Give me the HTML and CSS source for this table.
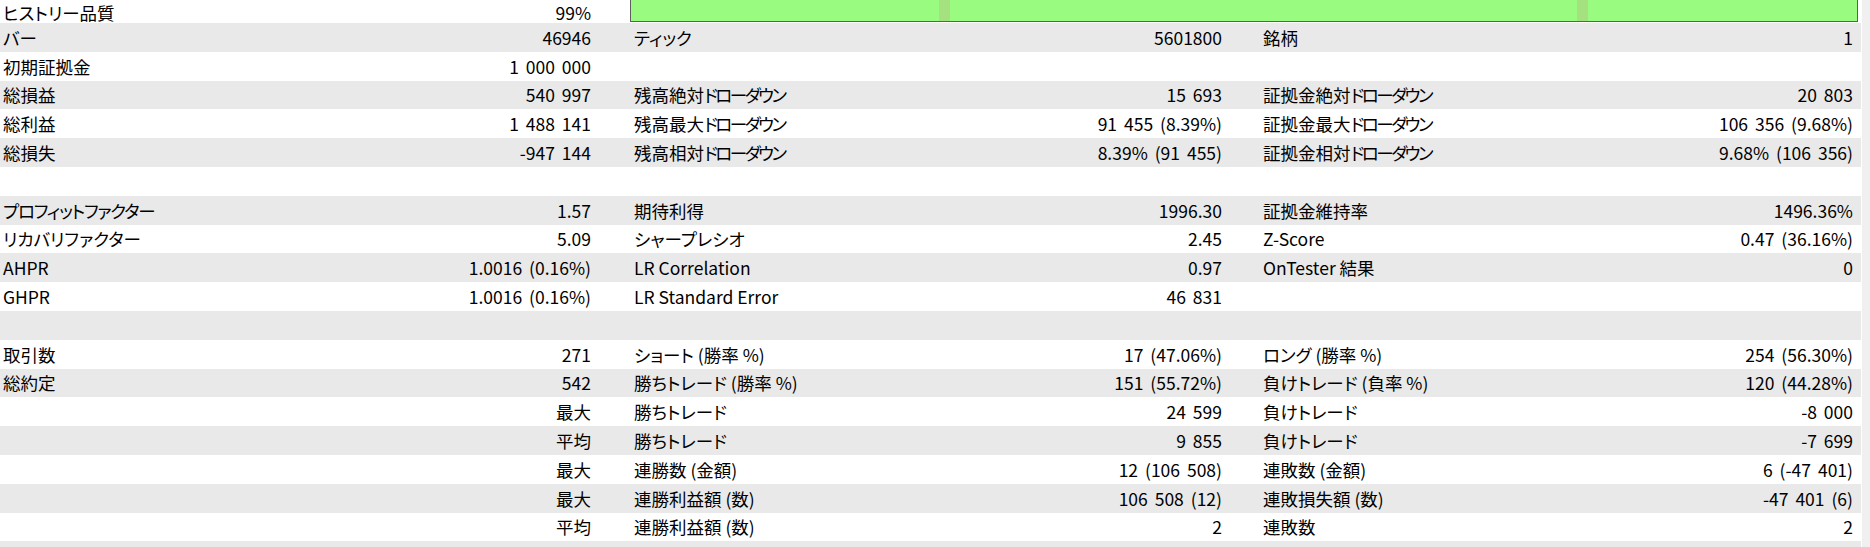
FILE: index.html
```html
<!DOCTYPE html>
<html lang="ja">
<head>
<meta charset="utf-8">
<title>Report</title>
<link rel="stylesheet" href="styles.css">
</head>
<body>
<div class="page">
  <div class="table">
    <div class="row first">
      <div class="lbl">ヒストリー品質</div><div class="val">99%</div><div class="sp"></div>
      <div class="quality"><div class="seg s1"></div><div class="stripe"></div><div class="seg s2"></div><div class="stripe"></div><div class="seg s3"></div></div>
    </div>
    <div class="row"><div class="lbl">バー</div><div class="val">46946</div><div class="sp"></div><div class="lbl l2">ティック</div><div class="val">5601800</div><div class="sp"></div><div class="lbl">銘柄</div><div class="val">1</div><div></div></div>
    <div class="row"><div class="lbl">初期証拠金</div><div class="val">1 000 000</div><div class="sp"></div><div class="lbl l2"></div><div class="val"></div><div class="sp"></div><div class="lbl"></div><div class="val"></div><div></div></div>
    <div class="row"><div class="lbl">総損益</div><div class="val">540 997</div><div class="sp"></div><div class="lbl l2">残高絶対<span class="dd">ドローダウン</span></div><div class="val">15 693</div><div class="sp"></div><div class="lbl">証拠金絶対<span class="dd">ドローダウン</span></div><div class="val">20 803</div><div></div></div>
    <div class="row"><div class="lbl">総利益</div><div class="val">1 488 141</div><div class="sp"></div><div class="lbl l2">残高最大<span class="dd">ドローダウン</span></div><div class="val">91 455 (8.39%)</div><div class="sp"></div><div class="lbl">証拠金最大<span class="dd">ドローダウン</span></div><div class="val">106 356 (9.68%)</div><div></div></div>
    <div class="row"><div class="lbl">総損失</div><div class="val">-947 144</div><div class="sp"></div><div class="lbl l2">残高相対<span class="dd">ドローダウン</span></div><div class="val">8.39% (91 455)</div><div class="sp"></div><div class="lbl">証拠金相対<span class="dd">ドローダウン</span></div><div class="val">9.68% (106 356)</div><div></div></div>
    <div class="row"></div>
    <div class="row"><div class="lbl"><span class="pf">プロフィットファクター</span></div><div class="val">1.57</div><div class="sp"></div><div class="lbl l2">期待利得</div><div class="val">1996.30</div><div class="sp"></div><div class="lbl">証拠金維持率</div><div class="val">1496.36%</div><div></div></div>
    <div class="row"><div class="lbl">リカバリファクター</div><div class="val">5.09</div><div class="sp"></div><div class="lbl l2">シャープレシオ</div><div class="val">2.45</div><div class="sp"></div><div class="lbl">Z-Score</div><div class="val">0.47 (36.16%)</div><div></div></div>
    <div class="row"><div class="lbl">AHPR</div><div class="val">1.0016 (0.16%)</div><div class="sp"></div><div class="lbl l2">LR Correlation</div><div class="val">0.97</div><div class="sp"></div><div class="lbl">OnTester 結果</div><div class="val">0</div><div></div></div>
    <div class="row"><div class="lbl">GHPR</div><div class="val">1.0016 (0.16%)</div><div class="sp"></div><div class="lbl l2">LR Standard Error</div><div class="val">46 831</div><div class="sp"></div><div class="lbl"></div><div class="val"></div><div></div></div>
    <div class="row"></div>
    <div class="row"><div class="lbl">取引数</div><div class="val">271</div><div class="sp"></div><div class="lbl l2">ショート (勝率 %)</div><div class="val">17 (47.06%)</div><div class="sp"></div><div class="lbl">ロング (勝率 %)</div><div class="val">254 (56.30%)</div><div></div></div>
    <div class="row"><div class="lbl">総約定</div><div class="val">542</div><div class="sp"></div><div class="lbl l2">勝ちトレード (勝率 %)</div><div class="val">151 (55.72%)</div><div class="sp"></div><div class="lbl">負けトレード (負率 %)</div><div class="val">120 (44.28%)</div><div></div></div>
    <div class="row"><div class="lbl"></div><div class="val">最大</div><div class="sp"></div><div class="lbl l2">勝ちトレード</div><div class="val">24 599</div><div class="sp"></div><div class="lbl">負けトレード</div><div class="val">-8 000</div><div></div></div>
    <div class="row"><div class="lbl"></div><div class="val">平均</div><div class="sp"></div><div class="lbl l2">勝ちトレード</div><div class="val">9 855</div><div class="sp"></div><div class="lbl">負けトレード</div><div class="val">-7 699</div><div></div></div>
    <div class="row"><div class="lbl"></div><div class="val">最大</div><div class="sp"></div><div class="lbl l2">連勝数 (金額)</div><div class="val">12 (106 508)</div><div class="sp"></div><div class="lbl">連敗数 (金額)</div><div class="val">6 (-47 401)</div><div></div></div>
    <div class="row"><div class="lbl"></div><div class="val">最大</div><div class="sp"></div><div class="lbl l2">連勝利益額 (数)</div><div class="val">106 508 (12)</div><div class="sp"></div><div class="lbl">連敗損失額 (数)</div><div class="val">-47 401 (6)</div><div></div></div>
    <div class="row"><div class="lbl"></div><div class="val">平均</div><div class="sp"></div><div class="lbl l2">連勝利益額 (数)</div><div class="val">2</div><div class="sp"></div><div class="lbl">連敗数</div><div class="val">2</div><div></div></div>
    <div class="row"></div>
  </div>
  <div class="scroll"></div>
</div>
</body>
</html>
```

FILE: styles.css
```css
html, body {
  margin: 0;
  padding: 0;
  background: #ffffff;
  overflow: hidden;
}
.page {
  display: flex;
  width: 1870px;
  height: 547px;
  overflow: hidden;
}
.table {
  width: 1861px;
  margin-right: 1px;
  display: flex;
  flex-direction: column;
  font-family: "Noto Sans CJK JP", sans-serif;
  font-size: 17.5px;
  font-feature-settings: "palt" 1;
  color: #000;
}
.row {
  flex: 0 0 28.8px;
  height: 28.8px;
  display: grid;
  grid-template-columns: 300px 291px 39px 300px 292px 38px 300px 293px 8px;
  align-items: center;
  white-space: nowrap;
}
.row:nth-child(even) {
  background: #e9e9e9;
}
.row.first {
  flex-basis: 23px;
  height: 23px;
  align-items: stretch;
}
.row.first .lbl, .row.first .val {
  align-self: center;
}
.lbl {
  padding-left: 3px;
}
.lbl.l2 {
  padding-left: 4px;
}
.dd {
  letter-spacing: -2.5px;
}
.pf {
  letter-spacing: -1.2px;
}
.val {
  text-align: right;
  word-spacing: 3px;
}
.quality {
  grid-column: 4 / 10;
  display: flex;
  height: 21px;
  margin-right: 3px;
  border: 1px solid #5e5e5e;
  border-top: none;
  background: #99fc80;
}
.seg.s1 { width: 308px; }
.seg.s2 { width: 627px; }
.seg.s3 { flex: 1; }
.stripe {
  width: 11px;
  background: #a6e17f;
}
.scroll {
  width: 8px;
  background: #f0f0f0;
}
```
